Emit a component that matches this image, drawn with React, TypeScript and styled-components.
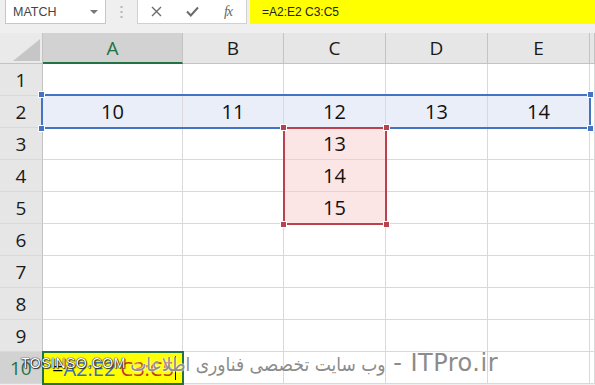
import React from 'react'
import styled, { createGlobalStyle, css } from 'styled-components'

const GRID = '#d9d9d9'
const HEAD_LINE = '#c3c3c3'
const GREEN = '#217346'
const BLUE = '#4472c4'
const RED = '#b8434e'

const GlobalStyle = createGlobalStyle`
  html, body {
    margin: 0;
    padding: 0;
    background: #efefef;
    font-family: 'Open Sans', 'Liberation Sans', sans-serif;
    overflow: hidden;
  }
`

type Pos = { $r: number; $c: number }

const place = css<Pos>`
  grid-row: ${({ $r }) => $r};
  grid-column: ${({ $c }) => $c};
`

const St = {
  Page: styled.div`
    position: relative;
    width: 595px;
    height: 385px;
    overflow: hidden;
  `,
  Toolbar: styled.div`
    display: flex;
    align-items: stretch;
    height: 24px;
    padding-left: 5px;
  `,
  NameBox: styled.div`
    box-sizing: border-box;
    width: 101px;
    display: flex;
    align-items: center;
    justify-content: space-between;
    padding: 0 7px 0 7px;
    background: #fff;
    border: 1px solid #c6c6c6;
    border-top: none;
    font-family: 'Liberation Sans', sans-serif;
    font-size: 12.5px;
    color: #444;
  `,
  Caret: styled.span`
    width: 0;
    height: 0;
    border-left: 4px solid transparent;
    border-right: 4px solid transparent;
    border-top: 4px solid #777;
    margin-top: 1px;
  `,
  Grip: styled.div`
    width: 31px;
    display: flex;
    align-items: center;
    justify-content: center;
  `,
  FxBox: styled.div`
    box-sizing: border-box;
    width: 110px;
    display: flex;
    align-items: center;
    background: #fff;
    border: 1px solid #d0d0d0;
    border-top: none;
  `,
  FxButton: styled.div`
    width: 36px;
    display: flex;
    justify-content: center;
    align-items: center;
    color: #666;
  `,
  FxText: styled.span`
    font-family: 'Liberation Serif', serif;
    font-style: italic;
    font-size: 14px;
    color: #666;
    letter-spacing: -1px;
  `,
  Formula: styled.div`
    flex: 1;
    margin-left: 3px;
    background: #ffff00;
    display: flex;
    align-items: center;
    padding-left: 12px;
    font-family: 'Liberation Sans', sans-serif;
    font-size: 12px;
    color: #222;
  `,
  Sheet: styled.div`
    margin-top: 9px;
    display: grid;
    grid-template-columns: 43px 140px 101px 102px 102px 102px 1fr;
    grid-template-rows: 31px repeat(10, 32px);
    background: #fff;
  `,
  Corner: styled.div`
    position: relative;
    grid-row: 1;
    grid-column: 1;
    box-sizing: border-box;
    background: #eaeaea;
    border-right: 1px solid ${HEAD_LINE};
    border-bottom: 1px solid ${HEAD_LINE};
    overflow: hidden;
  `,
  ColHead: styled.div<Pos & { $selected?: boolean }>`
    ${place};
    box-sizing: border-box;
    display: flex;
    align-items: center;
    justify-content: center;
    font-size: 19px;
    color: #1a1a1a;
    background: #e6e6e6;
    border-right: 1px solid ${HEAD_LINE};
    border-bottom: 1px solid ${HEAD_LINE};
    ${({ $selected }) =>
      $selected &&
      css`
        background: #d2d2d2;
        color: ${GREEN};
        border-bottom: 2px solid ${GREEN};
        padding-top: 1px;
      `}
  `,
  RowHead: styled.div<Pos & { $selected?: boolean }>`
    ${place};
    box-sizing: border-box;
    display: flex;
    align-items: center;
    justify-content: center;
    font-size: 19px;
    color: #1a1a1a;
    background: #e6e6e6;
    border-right: 1px solid ${HEAD_LINE};
    border-bottom: 1px solid ${GRID};
    ${({ $selected }) =>
      $selected &&
      css`
        background: #d2d2d2;
        color: ${GREEN};
        justify-content: flex-start;
        padding-left: 10px;
      `}
  `,
  Cell: styled.div<Pos & { $fill?: 'blue' | 'red' }>`
    ${place};
    box-sizing: border-box;
    display: flex;
    align-items: center;
    justify-content: center;
    font-size: 20px;
    color: #111;
    border-right: 1px solid ${GRID};
    border-bottom: 1px solid ${GRID};
    background: ${({ $fill }) => ($fill === 'blue' ? '#e9eef8' : $fill === 'red' ? '#fbe5e5' : '#fff')};
  `,
  EditCell: styled.div<Pos>`
    ${place};
    margin: -1px -1px -1px -1px;
    box-sizing: border-box;
    display: flex;
    align-items: center;
    padding-left: 8px;
    border: 2px solid ${GREEN};
    background: #ffff00;
    font-size: 20px;
    white-space: nowrap;
    overflow: hidden;
    z-index: 1;
  `,
  Ref: styled.span<{ $color: string }>`
    color: ${({ $color }) => $color};
  `,
  Cursor: styled.span`
    display: inline-block;
    width: 1px;
    height: 24px;
    background: #000;
    margin-left: 1px;
  `,
  Range: styled.div<{ $color: string; $col: string; $row: string; $m: string }>`
    position: relative;
    grid-column: ${({ $col }) => $col};
    grid-row: ${({ $row }) => $row};
    margin: ${({ $m }) => $m};
    border: 2px solid ${({ $color }) => $color};
    pointer-events: none;
  `,
  Handle: styled.span<{ $color: string; $x: 'left' | 'right'; $y: 'top' | 'bottom' }>`
    position: absolute;
    width: 5px;
    height: 5px;
    background: ${({ $color }) => $color};
    border: 1px solid #fff;
    ${({ $x }) => $x}: -5px;
    ${({ $y }) => $y}: -5px;
  `,
  Watermark: styled.div`
    position: absolute;
    left: 0;
    right: 0;
    top: 352px;
    height: 30px;
    pointer-events: none;
    z-index: 2;
  `,
  Tosinso: styled.span`
    position: absolute;
    left: 21px;
    top: 3px;
    font-family: 'Liberation Sans', sans-serif;
    font-size: 14px;
    letter-spacing: 0.5px;
    color: #fff;
    text-shadow: 0 0 1px #000, 0 0 1px #000, 1px 1px 1px #333;
  `,
  Persian: styled.span`
    position: absolute;
    right: 97px;
    top: -3px;
    direction: rtl;
    font-family: 'DejaVu Sans', sans-serif;
    font-size: 24px;
    color: #8c8c8c;
    white-space: nowrap;
    text-shadow: 0 0 2px #fff, 0 0 2px #fff;
  `,
  Latin: styled.span`
    letter-spacing: 0.5px;
  `,
  PersianWords: styled.span`
    font-family: 'DejaVu Sans Condensed', 'DejaVu Sans', sans-serif;
    font-size: 19px;
  `,
}

const columns = ['A', 'B', 'C', 'D', 'E']
const rowTwo = [10, 11, 12, 13, 14]
const colC: Record<number, number> = { 3: 13, 4: 14, 5: 15 }

const Range = ({ color, col, row, m }: { color: string; col: string; row: string; m: string }) => (
  <St.Range $color={color} $col={col} $row={row} $m={m}>
    <St.Handle $color={color} $x="left" $y="top" />
    <St.Handle $color={color} $x="right" $y="top" />
    <St.Handle $color={color} $x="left" $y="bottom" />
    <St.Handle $color={color} $x="right" $y="bottom" />
  </St.Range>
)

const App = () => {
  const rows = Array.from({ length: 10 }, (_, i) => i + 1)
  return (
    <St.Page>
      <GlobalStyle />
      <St.Toolbar>
        <St.NameBox>
          <span>MATCH</span>
          <St.Caret />
        </St.NameBox>
        <St.Grip>
          <svg width="3" height="12" viewBox="0 0 3 12">
            <rect x="0.5" y="0" width="2" height="2" fill="#b5b5b5" />
            <rect x="0.5" y="5" width="2" height="2" fill="#b5b5b5" />
            <rect x="0.5" y="10" width="2" height="2" fill="#b5b5b5" />
          </svg>
        </St.Grip>
        <St.FxBox>
          <St.FxButton>
            <svg width="11" height="11" viewBox="0 0 11 11">
              <path d="M1 1 L10 10 M10 1 L1 10" stroke="#6b6b6b" strokeWidth="1.4" />
            </svg>
          </St.FxButton>
          <St.FxButton>
            <svg width="13" height="11" viewBox="0 0 13 11">
              <path d="M1 5.5 L4.8 9.5 L12 1.5" stroke="#6b6b6b" strokeWidth="2" fill="none" />
            </svg>
          </St.FxButton>
          <St.FxButton>
            <St.FxText>fx</St.FxText>
          </St.FxButton>
        </St.FxBox>
        <St.Formula>=A2:E2 C3:C5</St.Formula>
      </St.Toolbar>

      <St.Sheet>
        <St.Corner>
          <svg width="27" height="22" viewBox="0 0 27 22" style={{ position: 'absolute', right: 2, bottom: 2 }}>
            <polygon points="27,0 27,22 0,22" fill="#c6c6c6" />
          </svg>
        </St.Corner>
        {columns.map((c, ci) => (
          <St.ColHead key={c} $r={1} $c={ci + 2} $selected={c === 'A'}>
            {c}
          </St.ColHead>
        ))}
        <St.ColHead $r={1} $c={7} />

        {rows.map((r) => (
          <React.Fragment key={r}>
            <St.RowHead $r={r + 1} $c={1} $selected={r === 10}>
              {r}
            </St.RowHead>
            {columns.map((c, ci) => {
              const pos = { $r: r + 1, $c: ci + 2 }
              if (r === 10 && c === 'A') {
                return (
                  <St.EditCell key={c} {...pos}>
                    =<St.Ref $color="#3b6cc4">A2:E2</St.Ref>&nbsp;<St.Ref $color="#c0392b">C3:C5</St.Ref>
                    <St.Cursor />
                  </St.EditCell>
                )
              }
              if (r === 2) {
                return (
                  <St.Cell key={c} {...pos} $fill="blue">
                    {rowTwo[ci]}
                  </St.Cell>
                )
              }
              if (c === 'C' && colC[r]) {
                return (
                  <St.Cell key={c} {...pos} $fill="red">
                    {colC[r]}
                  </St.Cell>
                )
              }
              return <St.Cell key={c} {...pos} />
            })}
            <St.Cell $r={r + 1} $c={7} />
          </React.Fragment>
        ))}

        <Range color={BLUE} col="2 / 7" row="3" m="-2px -1px -1px -2px" />
        <Range color={RED} col="4" row="4 / 7" m="-1px -1px -1px -1px" />
      </St.Sheet>

      <St.Watermark>
        <St.Persian>
          <St.Latin>ITPro.ir -</St.Latin> <St.PersianWords>وب سایت تخصصی فناوری اطلاعات</St.PersianWords>
        </St.Persian>
        <St.Tosinso>TOSINSO.COM</St.Tosinso>
      </St.Watermark>
    </St.Page>
  )
}

export default App
